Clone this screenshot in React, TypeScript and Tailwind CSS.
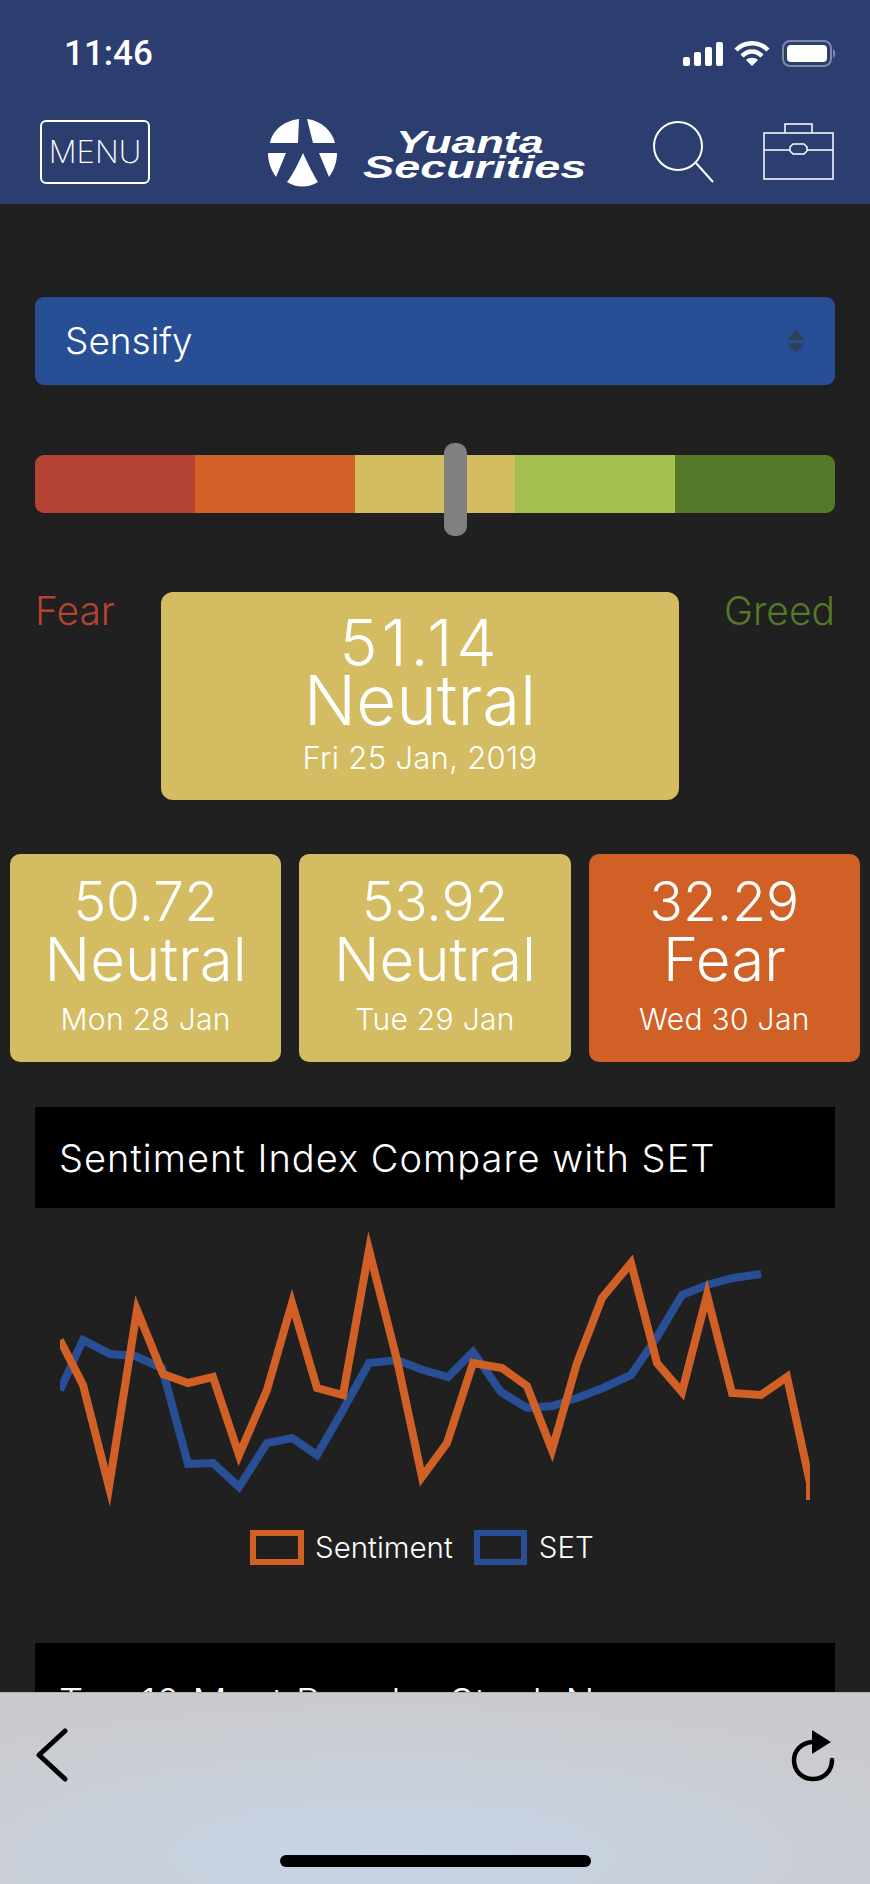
const orange = "60,1340 83,1385 109,1487 137,1310 163,1374 188,1383 213,1377 239,1455 267,1390 292,1303 317,1388 343,1395 369,1250 397,1360 422,1477 447,1443 473,1363 502,1368 527,1386 552,1450 577,1363 602,1298 631,1263 657,1363 682,1392 707,1295 732,1393 761,1395 787,1377 810,1483 810,1500";
const blue = "60,1390 83,1340 110,1354 135,1356 162,1368 188,1464 213,1463 239,1487 267,1443 292,1438 317,1455 343,1410 369,1363 397,1360 423,1370 448,1377 473,1352 501,1392 527,1408 552,1406 577,1398 603,1388 631,1375 657,1337 682,1295 707,1285 733,1278 761,1274";

function Logo() {
  return (
    <svg width="72" height="70" viewBox="0 0 72 70" className="shrink-0" fill="white">
      <path d="M32 1 L31 25 L3 25 C5 13 16 3 32 1Z" />
      <path d="M40 1 C55 3 65 13 68 25 L46 25 Z" />
      <path d="M1 35 L19 35 L9 59 C4 52 1 44 1 35Z" />
      <path d="M70 35 L52 35 L62 59 C67 52 70 44 70 35Z" />
      <path d="M36 35 C41 46 47 58 51 64 C41 70 30 70 20 64 C25 58 31 46 36 35Z" />
    </svg>
  );
}

function Card({ value, label, date, color }: { value: string; label: string; date: string; color: string }) {
  return (
    <div className={`flex h-[208px] flex-1 flex-col items-center rounded-[10px] pt-[19px] text-white ${color}`}>
      <div className="text-[55px] leading-[56px] font-light">{value}</div>
      <div className="text-[60px] leading-[60px] font-light">{label}</div>
      <div className="mt-[13px] text-[30px] leading-[34px] font-light tracking-[0.01em]">{date}</div>
    </div>
  );
}

export default function App() {
  return (
    <div className="relative h-[1884px] w-[870px] overflow-hidden bg-[#202020] font-['Inter',sans-serif] text-white">
      <header className="h-[204px] bg-[#2c3e70]">
        <div className="flex h-[112px] items-start justify-between pt-[34px] pr-[33px] pl-[64px]">
          <span className="font-['Roboto',sans-serif] text-[35px] leading-[40px] font-medium">11:46</span>
          <div className="mt-[6px] flex items-center">
            <svg width="40" height="26" viewBox="0 0 40 26" fill="white" className="mr-[11px]">
              <rect x="0" y="16" width="7" height="9" rx="2" />
              <rect x="11" y="11" width="7" height="14" rx="2" />
              <rect x="22" y="6" width="7" height="19" rx="2" />
              <rect x="33" y="1" width="7" height="24" rx="2" />
            </svg>
            <svg width="36" height="26" viewBox="0 0 36 26" fill="none" stroke="white" strokeWidth="4.5" className="mr-[12px]">
              <path d="M2 9 C11 0 25 0 34 9" />
              <path d="M8 15 C14 9 22 9 28 15" />
              <path d="M18 25 L12 19 C15 16 21 16 24 19 Z" fill="white" stroke="none" />
            </svg>
            <svg width="55" height="27" viewBox="0 0 55 27">
              <rect x="1" y="1" width="48" height="25" rx="7" fill="none" stroke="#7d89a8" strokeWidth="2" />
              <rect x="5" y="5" width="40" height="17" rx="4" fill="white" />
              <path d="M51 9 C54 10 54 17 51 18 Z" fill="#7d89a8" />
            </svg>
          </div>
        </div>
        <nav className="flex items-start pl-[40px]">
          <div className="mt-[8px] flex h-[64px] w-[110px] items-center justify-center rounded-[6px] border-2 border-white text-[31px] font-extralight">
            MENU
          </div>
          <div className="ml-[117px] mt-[6px] flex">
            <Logo />
            <div className="ml-[24px] mt-[12px] flex flex-col font-['Liberation_Sans',sans-serif] text-[32px] leading-[25px] font-bold italic">
              <span className="ml-[33px] origin-left scale-x-[1.4]">Yuanta</span>
              <span className="origin-left scale-x-[1.46]">Securities</span>
            </div>
          </div>
          <svg width="62" height="64" viewBox="0 0 62 64" fill="none" stroke="white" strokeWidth="2" className="absolute top-[120px] left-[652px]">
            <circle cx="26" cy="26" r="24" />
            <path d="M44 43 L61 62" />
          </svg>
          <svg width="71" height="57" viewBox="0 0 71 57" fill="none" stroke="white" strokeWidth="1.5" className="absolute top-[123px] left-[763px]">
            <path d="M22 10 V1 H49 V10" />
            <rect x="1" y="10" width="69" height="46" />
            <path d="M1 27 H27 M44 27 H70" />
            <path d="M30 21 H41 L44 24 V28 L41 31 H30 L27 28 V24 Z" />
          </svg>
        </nav>
      </header>

      <main className="px-[35px] pt-[93px]">
        <div className="flex h-[88px] items-center justify-between rounded-[9px] bg-[#284e95] pr-[30px] pl-[30px]">
          <span className="text-[37px] font-light">Sensify</span>
          <svg width="18" height="23" viewBox="0 0 18 23" fill="#2f3f58">
            <path d="M9 0 L18 10 H0Z" />
            <path d="M0 13 H18 L9 23Z" />
          </svg>
        </div>

        <div className="relative mt-[70px] flex h-[58px] overflow-hidden rounded-[9px]">
          <div className="flex-1 bg-[#b54334]" />
          <div className="flex-1 bg-[#d06026]" />
          <div className="flex-1 bg-[#d3bc62]" />
          <div className="flex-1 bg-[#a5bf50]" />
          <div className="flex-1 bg-[#557928]" />
        </div>
        <div className="absolute top-[443px] left-[444px] h-[93px] w-[23px] rounded-[10px] bg-[#808080]" />

        <div className="mt-[79px] flex items-start">
          <span className="mt-[-2px] w-[126px] text-[39px] leading-[42px] font-light text-[#b54334]">Fear</span>
          <div className="flex h-[208px] w-[518px] flex-col items-center rounded-[12px] bg-[#d3bc62] pt-[19px]">
            <div className="text-[64px] leading-[64px] font-light tracking-[4px]">51.14</div>
            <div className="text-[69px] leading-[50px] font-light">Neutral</div>
            <div className="mt-[15px] text-[31px] leading-[36px] font-light tracking-[0.01em]">Fri 25 Jan, 2019</div>
          </div>
          <span className="mt-[-2px] flex-1 text-right text-[39px] leading-[42px] font-light text-[#557928]">Greed</span>
        </div>

        <div className="mx-[-25px] mt-[54px] flex gap-[18px]">
          <Card value="50.72" label="Neutral" date="Mon 28 Jan" color="bg-[#d3bc62]" />
          <Card value="53.92" label="Neutral" date="Tue 29 Jan" color="bg-[#d3bc62]" />
          <Card value="32.29" label="Fear" date="Wed 30 Jan" color="bg-[#d06026]" />
        </div>

        <div className="mt-[45px] flex h-[101px] items-center bg-black pt-[2px] pl-[24px] text-[38px] font-light tracking-[0.027em]">
          Sentiment Index Compare with SET
        </div>

        <svg width="801" height="312" viewBox="35 1208 801 312" className="block" fill="none">
          <defs>
            <clipPath id="plot">
              <rect x="60" y="1208" width="750" height="312" />
            </clipPath>
          </defs>
          <g clipPath="url(#plot)" strokeWidth="8" strokeLinejoin="miter" strokeMiterlimit="10">
            <polyline points={blue} stroke="#284e95" />
            <polyline points={orange} stroke="#d06026" />
          </g>
        </svg>

        <div className="mt-[10px] flex h-[35px] items-center pl-[215px] text-[29.5px] font-light">
          <span className="mr-[11px] h-[35px] w-[54px] border-[6px] border-[#d06026]" />
          <span>Sentiment</span>
          <span className="mr-[12px] ml-[21px] h-[35px] w-[53px] border-[6px] border-[#284e95]" />
          <span>SET</span>
        </div>

        <div className="mt-[78px] h-[120px] bg-black pt-[31px] pl-[24px] text-[38px] font-light tracking-[0.027em]">
          Top 10 Most Popular Stock News
        </div>
      </main>

      <footer className="absolute inset-x-0 bottom-0 h-[192px] border-t border-[#aeb0b4] bg-[radial-gradient(ellipse_70%_80%_at_45%_85%,#c7d4e7,#cacbce)]">
        <svg width="34" height="54" viewBox="0 0 34 54" fill="none" stroke="black" strokeWidth="5" strokeLinecap="round" strokeLinejoin="round" className="absolute top-[35px] left-[35px]">
          <path d="M30 3 L4 27 L30 51" />
        </svg>
        <svg width="44" height="52" viewBox="0 0 44 52" className="absolute top-[37px] left-[791px]" fill="none">
          <path d="M21 12 C10 13 3 21 3 30 C3 41 11 49 22 49 C33 49 41 41 41 30" stroke="black" strokeWidth="4.5" strokeLinecap="round" />
          <path d="M21 0 L40 12 L21 24Z" fill="black" />
        </svg>
        <div className="absolute top-[162px] left-[280px] h-[12px] w-[311px] rounded-full bg-black" />
      </footer>
    </div>
  );
}
